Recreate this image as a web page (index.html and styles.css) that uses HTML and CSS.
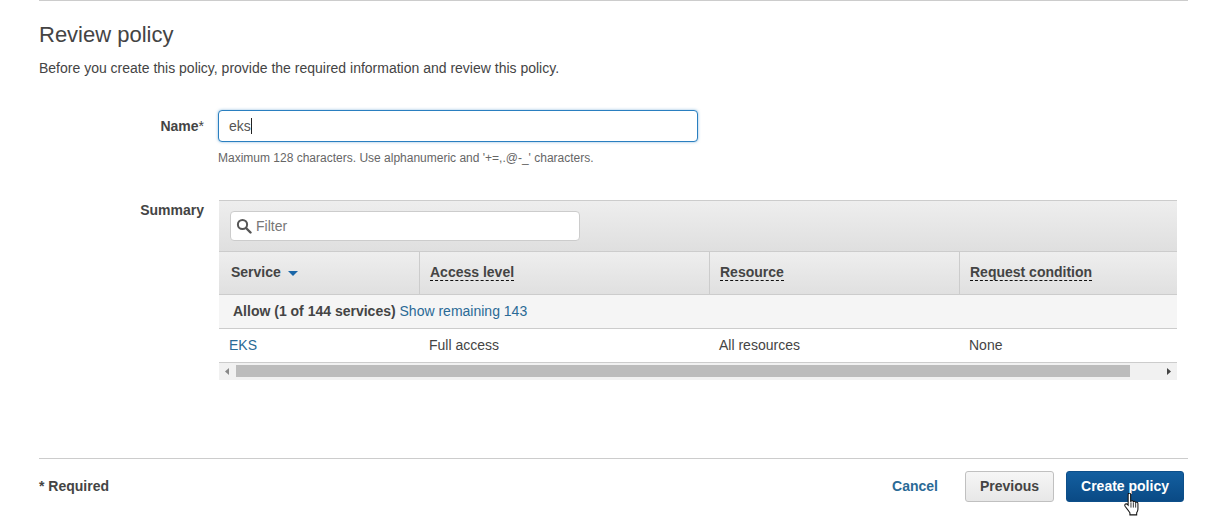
FILE: index.html
```html
<!DOCTYPE html>
<html lang="en">
<head>
<meta charset="utf-8">
<title>Review policy</title>
<link rel="stylesheet" href="styles.css">
</head>
<body>
<main class="page">
  <h1 class="title">Review policy</h1>
  <p class="intro">Before you create this policy, provide the required information and review this policy.</p>

  <div class="form-row name-row">
    <div class="label"><b>Name</b>*</div>
    <div class="field">
      <div class="name-input"><span>eks</span><i class="caret"></i></div>
      <div class="hint">Maximum 128 characters. Use alphanumeric and '+=,.@-_' characters.</div>
    </div>
  </div>

  <div class="form-row summary-row">
    <div class="label summary-label"><b>Summary</b></div>
    <div class="table">
      <div class="toolbar">
        <div class="filter">
          <svg class="search" width="16" height="16" viewBox="0 0 16 16"><circle cx="6.5" cy="6.5" r="4.6" fill="none" stroke="#555" stroke-width="2"/><path d="M10 10l4.500 4.500" stroke="#555" stroke-width="2.400" stroke-linecap="round"/></svg>
          <span>Filter</span>
        </div>
      </div>
      <div class="grid head">
        <div class="th th-service"><span>Service</span><svg class="sort" width="10" height="5" viewBox="0 0 10 5"><path d="M0 0h10L5 5z" fill="#1a66a8"/></svg></div>
        <div class="th"><span class="dashed">Access level</span></div>
        <div class="th"><span class="dashed">Resource</span></div>
        <div class="th"><span class="dashed">Request condition</span></div>
      </div>
      <div class="group"><b>Allow (1 of 144 services)</b> <a>Show remaining 143</a></div>
      <div class="grid row">
        <div class="td"><a>EKS</a></div>
        <div class="td">Full access</div>
        <div class="td">All resources</div>
        <div class="td">None</div>
      </div>
      <div class="scrollbar">
        <svg width="17" height="17" viewBox="0 0 17 17"><path d="M6 8.500l4-3.500v7z" fill="#888"/></svg>
        <div class="track"><div class="thumb"></div></div>
        <svg width="17" height="17" viewBox="0 0 17 17"><path d="M11 8.500l-4-3.500v7z" fill="#444"/></svg>
      </div>
    </div>
  </div>

  <footer class="footer">
    <div class="required">* Required</div>
    <div class="actions">
      <a class="cancel">Cancel</a>
      <button class="btn secondary">Previous</button>
      <button class="btn primary">Create policy</button>
    </div>
  </footer>
</main>
<svg class="cursor" width="18" height="25" viewBox="2 1 15 24"><path d="M6 1.500c1-.8 2.200-.2 2.200 1v7l.4-.8c1-.6 2-.3 2.200.6 1-.6 2-.3 2.200.7 1-.5 2.200 0 2.200 1.200v5.300c0 1.500-.7 2.500-1.200 3.500v2H7.500v-2c-1-1.500-2.500-3.500-4.500-6-.7-1-.5-2 .3-2.400.8-.4 1.700 0 2.500 1V2.500z" fill="#fff" stroke="#111" stroke-width="1"/><path d="M8.500 10v5M10.800 10v5M13 10.500V15" stroke="#111" stroke-width=".8" fill="none"/></svg>
</body>
</html>
```

FILE: styles.css
```css
* { box-sizing: border-box; }
html, body { margin: 0; height: 527px; overflow: hidden; background: #fff; }
body {
  font-family: "Liberation Sans", Arial, sans-serif;
  font-size: 14px;
  color: #444;
  position: relative;
}
.page {
  margin: 0 22px 0 39px;
  border-top: 1px solid #ccc;
  height: 527px;
  display: flex;
  flex-direction: column;
}
.title {
  margin: 21px 0 0;
  font-size: 22px;
  font-weight: 400;
  line-height: 26px;
  color: #444;
}
.intro { margin: 12px 0 0; line-height: 16px; }
.form-row { display: flex; }
.name-row { margin-top: 34px; }
.label {
  width: 165px;
  flex: none;
  text-align: right;
  line-height: 32px;
  color: #444;
}
.field { margin-left: 14px; }
.name-input {
  width: 480px;
  height: 32px;
  border: 1px solid #2a7fc0;
  border-radius: 4px;
  box-shadow: 0 0 3px rgba(42, 127, 192, .55);
  padding-left: 10px;
  display: flex;
  align-items: center;
  background: #fff;
  color: #555;
}
.caret { width: 1px; height: 16px; background: #222; }
.hint { margin-top: 9px; font-size: 12px; line-height: 15px; color: #666; }
.summary-row { margin-top: 34px; }
.summary-label { line-height: 20px; }
.table { margin-left: 15px; width: 958px; flex: none; }
.toolbar {
  height: 52px;
  border-top: 1px solid #ccc;
  border-bottom: 1px solid #ccc;
  background: linear-gradient(#eee, #dfdfdf);
  padding: 10px 11px;
}
.filter {
  width: 350px;
  height: 30px;
  background: #fff;
  border: 1px solid #ccc;
  border-radius: 4px;
  display: flex;
  align-items: center;
  padding-left: 5px;
  gap: 4px;
  color: #777;
}
.grid { display: grid; grid-template-columns: 201px 290px 250px 1fr; }
.head {
  height: 43px;
  border-bottom: 1px solid #ccc;
  background: linear-gradient(#eee, #e0e0e0);
}
.th {
  font-weight: 700;
  padding-left: 12px;
  padding-bottom: 2px;
  border-right: 1px solid #ccc;
  display: flex;
  align-items: center;
  gap: 7px;
}
.th:nth-child(n+2) { padding-left: 10px; }
.th:last-child { border-right: 0; }
.dashed { border-bottom: 1px dashed #111; line-height: 16px; }
.sort { margin-top: 2px; }
.group {
  height: 34px;
  background: #f5f5f5;
  border-bottom: 1px solid #ccc;
  padding-left: 14px;
  line-height: 33px;
}
a { color: #2a6a96; }
.row { height: 34px; border-bottom: 1px solid #ccc; line-height: 33px; }
.td { padding-left: 9px; }
.td:first-child { padding-left: 10px; }
.scrollbar { height: 17px; display: flex; background: #f1f1f1; }
.track { flex: 1; padding: 2px 0 3px; }
.thumb { width: 894px; height: 12px; background: #bcbcbc; }
.footer {
  margin-top: 78px;
  border-top: 1px solid #ccc;
  display: flex;
  justify-content: space-between;
  align-items: flex-start;
  padding-top: 12px;
  line-height: 31px;
}
.required { font-weight: 700; }
.actions { display: flex; align-items: center; margin-right: 4px; }
.cancel { font-weight: 700; margin-right: 27px; }
.btn {
  font: 700 14px "Liberation Sans", Arial, sans-serif;
  height: 31px;
  border-radius: 3px;
  padding: 0 0 2px;
}
.secondary {
  width: 89px;
  color: #444;
  border: 1px solid #c0c0c0;
  background: linear-gradient(#f6f6f6, #e7e7e7);
  margin-right: 12px;
}
.primary {
  width: 118px;
  color: #fff;
  border: 1px solid #0d4f8a;
  background: linear-gradient(#135fa0, #0a4a85);
}
.cursor { position: absolute; left: 1123px; top: 493px; }
```
